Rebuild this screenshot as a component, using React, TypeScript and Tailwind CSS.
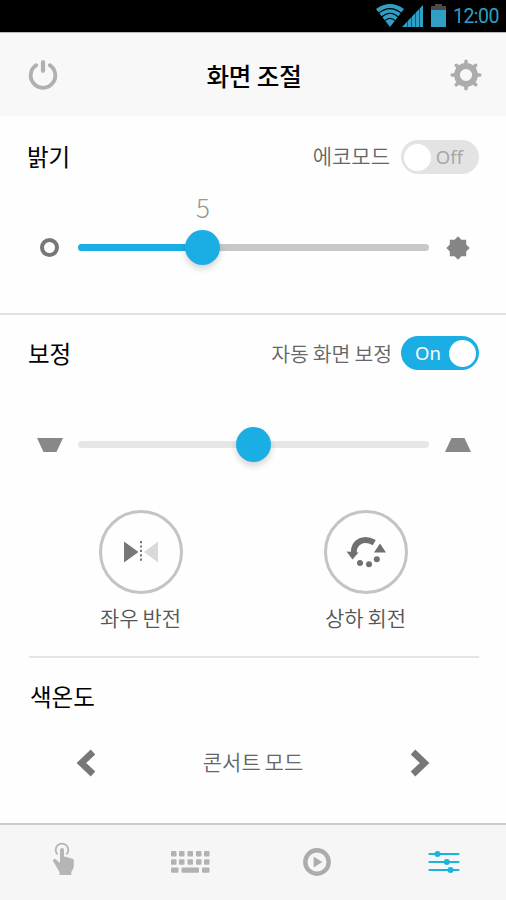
import { useState } from "react";

const PowerIcon = () => (
  <svg viewBox="0 0 30 32" fill="none" stroke="#b0b0b0" strokeLinecap="round" className="-mt-px h-8 w-[30px]">
    <path strokeWidth={3.8} d="M8.3 6.2a12.3 12.3 0 1 0 13.4 0" />
    <path strokeWidth={4.2} d="M15 3.2v8.6" />
  </svg>
);

const GearIcon = () => (
  <svg viewBox="-16 -16 32 32" fill="none" stroke="#acacac" className="-mt-px h-8 w-8">
    <circle r="9" strokeWidth={5.8} />
    <path
      strokeWidth={3.6}
      strokeLinecap="round"
      d="M0-10V-13.8M0 10V13.8M-10 0H-13.8M10 0H13.8M-7.2-7.2L-9.7-9.7M7.2-7.2L9.7-9.7M-7.2 7.2L-9.7 9.7M7.2 7.2L9.7 9.7"
    />
  </svg>
);

const StatusBar = () => (
  <div className="flex h-8 items-center justify-end bg-black pr-[7px] text-[#2f9fc4]">
    <svg viewBox="0 0 28 23" className="-mt-px h-[23px] w-7">
      <path fill="currentColor" d="M0 5Q14-5 28 5L14 23Z" />
      <g fill="none" stroke="#000" strokeWidth={1.1}>
        <path d="M2.5 9.3Q14 0 25.5 9.3" />
        <path d="M5.5 13Q14 5.6 22.5 13" />
        <path d="M8.6 16.8Q14 11.8 19.4 16.8" />
      </g>
    </svg>
    <svg viewBox="0 0 22 24" className="-mt-px -ml-[3px] h-6 w-[22px]">
      <path fill="currentColor" d="M22 1V23H1Z" />
      <path stroke="#0b4a61" strokeWidth={0.8} d="M6.5 17V23M10.5 13V23M14.5 9V23M18.5 5V23" />
    </svg>
    <svg viewBox="0 0 15 23" className="-mt-px ml-2 h-[23px] w-[15px]">
      <path fill="#4a4a4a" d="M4 0H11V2H15V6H0V2H4Z" />
      <path fill="currentColor" d="M0 6H15V23H0Z" />
    </svg>
    <span className="mt-[2px] ml-[7px] font-[Roboto] text-[19.5px] leading-8 tracking-[-0.5px]">12:00</span>
  </div>
);

const Toggle = ({ on, onClick }: { on: boolean; onClick: () => void }) => (
  <button
    onClick={onClick}
    className={`flex h-[34px] w-[78px] items-center justify-between rounded-full font-['Noto_Sans'] text-[18.5px] ${
      on ? "flex-row-reverse bg-[#1baee4] pr-[3px] pl-[14px] text-white" : "bg-[#e3e3e3] pr-[16px] pl-[3px] text-[#a6a6a6]"
    }`}
  >
    <span className="h-[27px] w-[27px] rounded-full bg-white" />
    <span className="leading-none">{on ? "On" : "Off"}</span>
  </button>
);

const Thumb = () => <span className="block h-[35px] w-[35px] rounded-full bg-[#1baee4] shadow-[0_4px_6px_rgba(0,0,0,0.16)]" />;

const HandIcon = () => (
  <svg viewBox="0 0 24 34" className="-mt-[5px] mr-[2px] h-[34px] w-6" fill="#b5b5b5">
    <path fill="none" stroke="#b5b5b5" strokeWidth={1.8} d="M5.6 12.4A6.3 6.3 0 1 1 14.4 12.4" />
    <path d="M8 8Q8 6 10 6T12 8V15Q13.5 13.8 15 15.6Q16.8 14.6 18 16.5Q20.5 15.7 21.8 18V24Q21.4 27.5 19.3 30V33H7.5V30L1 19Q.8 16.2 3.5 17.1L8 21Z" />
  </svg>
);

const KeyboardIcon = () => (
  <svg viewBox="0 0 39 22" className="mr-px h-[22px] w-[39px]" fill="#b2b2b2">
    {[0, 8, 16.5, 25, 33].map((x) => (
      <g key={x}>
        <rect x={x} y="0" width="5.5" height="5.5" rx="1" />
        <rect x={x} y="8.3" width="5.5" height="5.5" rx="1" />
      </g>
    ))}
    <rect x="0" y="16.6" width="7.5" height="5.2" rx="1" />
    <rect x="10.5" y="16.6" width="17.5" height="5.2" rx="1" />
    <rect x="31" y="16.6" width="7.5" height="5.2" rx="1" />
  </svg>
);

const PlayIcon = () => (
  <svg viewBox="0 0 28 28" className="h-7 w-7">
    <circle cx="14" cy="14" r="11.7" fill="none" stroke="#acacac" strokeWidth={4.4} />
    <path fill="#acacac" d="M10.6 8.5L19.2 14L10.6 19.5Z" />
  </svg>
);

const SlidersIcon = () => (
  <svg viewBox="0 0 32 24" className="ml-[2px] h-6 w-8" fill="#1cb3d9">
    <path stroke="#1cb3d9" strokeWidth={2.2} strokeLinecap="round" d="M1.5 4H30.5M1.5 12H30.5M1.5 20H30.5" />
    <circle cx="9.5" cy="4" r="3" />
    <circle cx="18.8" cy="12" r="3" />
    <circle cx="22.5" cy="20" r="3" />
  </svg>
);

const App = () => {
  const [eco, setEco] = useState(false);
  const [auto, setAuto] = useState(true);

  return (
    <div lang="ko" className="flex h-[900px] w-[506px] flex-col overflow-hidden bg-[#fefefe] font-['Noto_Sans_CJK_KR',sans-serif] text-black">
      <StatusBar />
      <header className="flex h-[84px] items-center justify-between border-t border-[#bbb] bg-[#f8f8f8] pt-[2px] pr-6 pl-[28px]">
        <PowerIcon />
        <h1 className="mt-[2px] text-[24.5px] leading-none font-medium tracking-[-0.2px] [word-spacing:-1px]">화면 조절</h1>
        <GearIcon />
      </header>

      <section className="h-[199px] border-b-2 border-[#e2e2e2] pt-6">
        <div className="flex h-[34px] items-center pr-[27px] pl-[27px]">
          <h2 className="-mt-px text-[23.5px] leading-none font-normal">밝기</h2>
          <span className="-mt-[3px] mr-[11px] ml-auto text-[21px] leading-none font-[350] text-[#666]">에코모드</span>
          <Toggle on={eco} onClick={() => setEco(!eco)} />
        </div>
        <div className="mt-[56px] flex h-[35px] items-center pr-[36px] pl-[40px]">
          <span className="h-[19px] w-[19px] rounded-full border-4 border-[#777]" />
          <div className="relative ml-[19px] h-[7px] w-[351px] rounded-full bg-[#c8c8c8]">
            <div className="h-full w-[125px] rounded-full bg-[#1baee4]" />
            <div className="absolute top-[-14px] left-[107px]">
              <Thumb />
            </div>
            <span className="absolute top-[-49px] left-[118px] text-[26px] leading-6 font-light text-[#999]">5</span>
          </div>
          <svg viewBox="-12 -12 24 24" className="ml-auto h-6 w-6" fill="#858585">
            <path d="M0-11.7L3.4-8.2L8.2-8.2L8.2-3.4L11.7 0L8.2 3.4L8.2 8.2L3.4 8.2L0 11.7L-3.4 8.2L-8.2 8.2L-8.2 3.4L-11.7 0L-8.2-3.4L-8.2-8.2L-3.4-8.2Z" />
          </svg>
        </div>
      </section>

      <section className="mr-[27px] ml-[29px] h-[343px] border-b-2 border-[#e4e4e4] pt-[21px]">
        <div className="flex h-[34px] items-center">
          <h2 className="mt-[2px] -ml-px text-[23.5px] leading-none font-normal">보정</h2>
          <span className="mt-px mr-[9px] ml-auto text-[20.5px] leading-none font-[350] tracking-[-0.1px] text-[#666] [word-spacing:-1.5px]">
            자동 화면 보정
          </span>
          <Toggle on={auto} onClick={() => setAuto(!auto)} />
        </div>
        <div className="mt-[57px] flex h-[35px] items-center pr-[8px] pl-2">
          <svg viewBox="0 0 26 14" className="h-[14px] w-[26px]" fill="#888">
            <path d="M0 0H26L19.5 14H6.5Z" />
          </svg>
          <div className="relative ml-[15px] h-[7px] w-[351px] rounded-full bg-[#e6e6e6]">
            <div className="absolute top-[-14px] left-[158px]">
              <Thumb />
            </div>
          </div>
          <svg viewBox="0 0 26 14" className="ml-auto h-[14px] w-[26px]" fill="#888">
            <path d="M6.5 0H19.5L26 14H0Z" />
          </svg>
        </div>
        <div className="mr-px -ml-px mt-[48px] grid grid-cols-2 text-center text-[21px] leading-none font-[350] text-[#555] [word-spacing:-2px]">
          <div className="flex flex-col items-center">
            <div className="flex h-[84px] w-[84px] items-center justify-center rounded-full border-[3.5px] border-[#c4c4c4]">
              <svg viewBox="0 0 34 24" className="h-6 w-[34px]">
                <path fill="#777" d="M0 1.5L14.5 12L0 22.5Z" />
                <path fill="#dadada" d="M34 1.5L20 12L34 22.5Z" />
                <path stroke="#777" strokeWidth={2} strokeDasharray="2.2 2.2" d="M17 1V23" />
              </svg>
            </div>
            <span className="mt-[13px]">좌우 반전</span>
          </div>
          <div className="flex flex-col items-center">
            <div className="flex h-[84px] w-[84px] items-center justify-center rounded-full border-[3.5px] border-[#c4c4c4]">
              <svg viewBox="0 0 40 34" className="h-[34px] w-10" fill="#707070">
                <path fill="none" stroke="#707070" strokeWidth={6} d="M7.6 18.5C7.6 6 18 1.8 28.3 7.6" />
                <path d="M.5 16.5L12.5 17.5L6.5 24.5Z" />
                <path d="M34 8.5L40 17.4H28Z" />
                <circle cx="14" cy="28" r="3" />
                <circle cx="23" cy="29.3" r="3" />
                <circle cx="30.8" cy="24.3" r="3" />
              </svg>
            </div>
            <span className="mt-[13px]">상하 회전</span>
          </div>
        </div>
      </section>

      <section className="flex-1 pt-[27px]">
        <h2 className="pl-[30px] text-[23.5px] leading-none font-normal">색온도</h2>
        <div className="mt-[40px] flex h-[28px] items-center justify-between px-[76px]">
          <svg viewBox="0 0 20 28" fill="none" stroke="#777" strokeWidth={6.6} className="h-7 w-5">
            <path d="M17 3L5.4 14L17 25" />
          </svg>
          <span className="-mt-[2px] text-[21px] leading-none font-[350] text-[#666] [word-spacing:-2px]">콘서트 모드</span>
          <svg viewBox="0 0 20 28" fill="none" stroke="#777" strokeWidth={6.6} className="h-7 w-5">
            <path d="M3 3L14.6 14L3 25" />
          </svg>
        </div>
      </section>

      <nav className="grid h-[77px] grid-cols-4 place-items-center border-t-2 border-[#ccc] bg-[#f6f6f6] pb-[2px] pl-[2px]">
        <HandIcon />
        <KeyboardIcon />
        <PlayIcon />
        <SlidersIcon />
      </nav>
    </div>
  );
};

export default App;
